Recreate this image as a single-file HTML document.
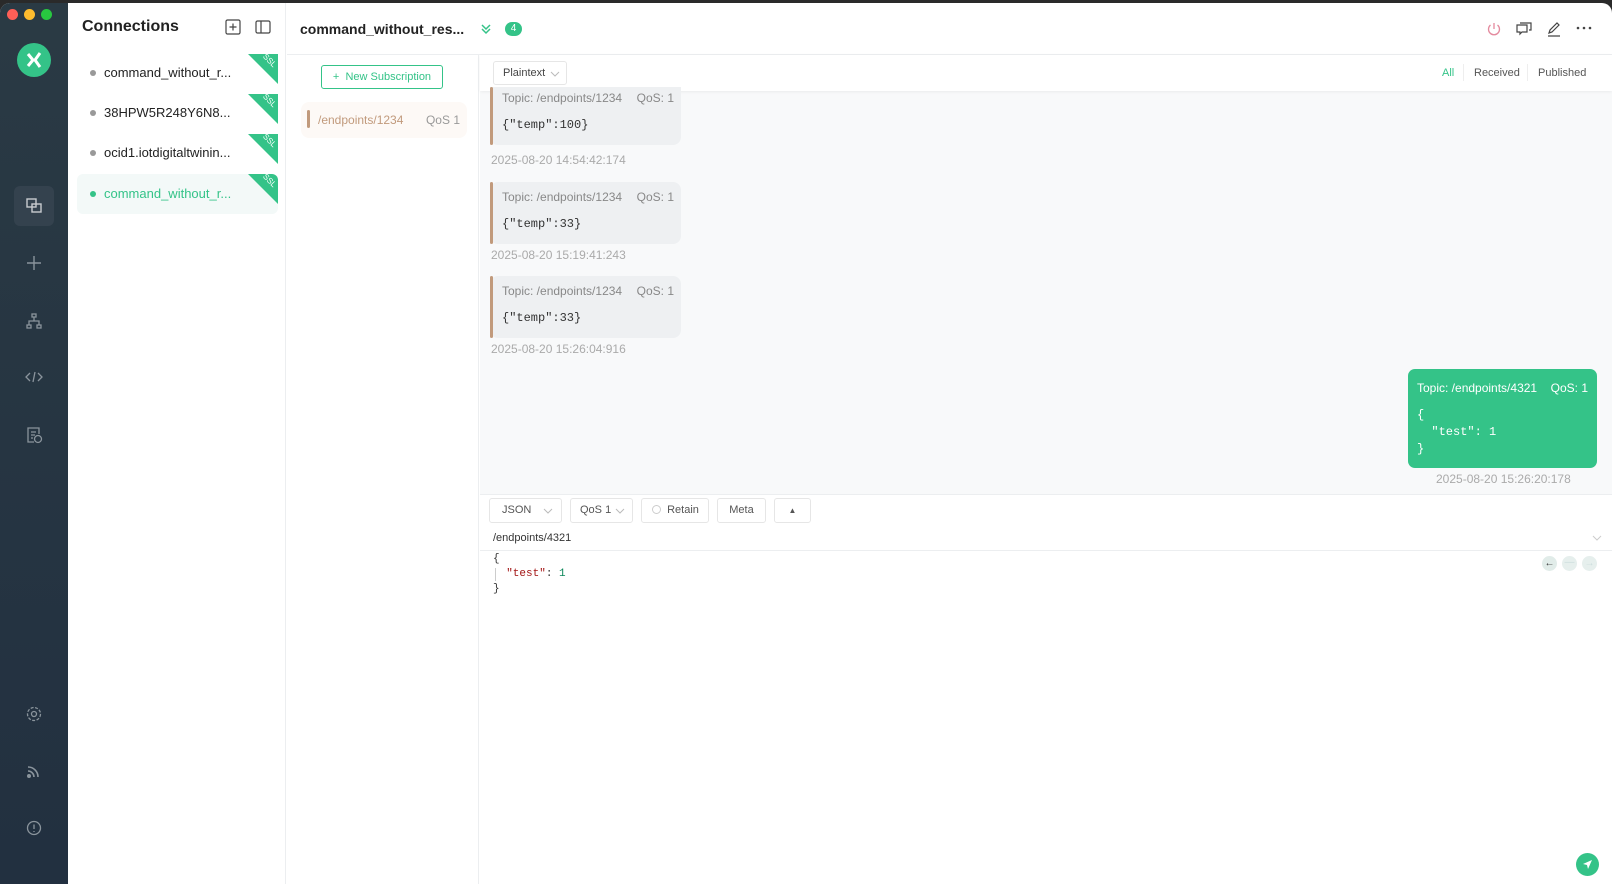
<!DOCTYPE html>
<html><head><meta charset="utf-8">
<style>
*{box-sizing:border-box;margin:0;padding:0}
body{width:1612px;height:884px;overflow:hidden;background:#2a2a2a;font-family:"Liberation Sans",sans-serif;position:relative}
.win{position:absolute;left:0;top:3px;width:1612px;height:881px;background:#fff;border-radius:10px 10px 0 0;overflow:hidden}
.side{position:absolute;left:0;top:0;width:68px;height:100%;background:linear-gradient(#2a3a44,#223040)}
.dot{position:absolute;top:6px;width:11px;height:11px;border-radius:50%}
.ico{position:absolute;left:22px;width:24px;height:24px}
.conn{position:absolute;left:68px;top:0;width:218px;height:100%;background:#fff;border-right:1px solid #eceef0}
.item{position:absolute;left:9px;width:201px;height:38px;font-size:13px;color:#222;overflow:hidden}
.item .b{position:absolute;left:13px;top:16px;width:6px;height:6px;border-radius:50%;background:#999}
.item .t{position:absolute;left:27px;top:11px}
.ssl{position:absolute;right:0;top:0;width:0;height:0;border-top:30px solid #34c388;border-left:30px solid transparent}
.ssl i{position:absolute;right:1px;top:-28px;font-size:8px;color:#fff;transform:rotate(45deg);font-style:normal}
.main{position:absolute;left:287px;top:0;right:0;height:100%}
.hdr{position:absolute;left:0;right:0;top:0;height:52px;border-bottom:1px solid #eceef0}
.subs{position:absolute;left:0;top:52px;width:192px;bottom:0;border-right:1px solid #eceef0}
.msgs{position:absolute;left:193px;top:52px;right:0;height:439px;background:#f8f9fa}
.tb{position:absolute;left:0;right:0;top:0;height:36px;background:#fff;box-shadow:0 1px 3px rgba(0,0,0,.06)}
.card{position:absolute;left:10px;width:191px;height:62px;background:#eef0f2;border-radius:8px;font-size:12px;color:#888}
.card:before{content:"";position:absolute;left:0;top:0;width:3px;height:100%;background:#c19a7c;border-radius:2px}
.card .tp{position:absolute;left:12px;top:8px}
.card .q{position:absolute;right:7px;top:8px}
.card .m{position:absolute;left:12px;top:35px;font-family:"Liberation Mono",monospace;color:#333;font-size:12px}
.ts{position:absolute;font-size:12px;color:#aaa}
.btn{position:absolute;top:495px;height:25px;border:1px solid #e6e6e6;border-radius:3px;font-size:11px;color:#555;background:#fff;line-height:23px;white-space:nowrap}
.chev{position:absolute;top:9px}
</style></head><body>
<div class="win">
<div class="side">
 <div class="dot" style="left:7px;background:#fe5f57"></div>
 <div class="dot" style="left:24px;background:#febc2e"></div>
 <div class="dot" style="left:41px;background:#28c840"></div>
 <div style="position:absolute;left:17px;top:40px;width:34px;height:34px;border-radius:50%;background:#34c388"></div>
 <svg style="position:absolute;left:17px;top:40px" width="34" height="34" viewBox="0 0 34 34"><path d="M11 11l5 6-5 6M23 10l-5 7 5 7" stroke="#fff" stroke-width="3" fill="none"/></svg>
 <div style="position:absolute;left:14px;top:183px;width:40px;height:40px;border-radius:6px;background:#34424e"></div>
 <svg class="ico" style="top:191px" viewBox="0 0 24 24" fill="none" stroke="#c8ccd0" stroke-width="1.4"><rect x="5" y="5" width="9" height="8"/><rect x="10" y="10" width="9" height="8"/></svg>
 <svg class="ico" style="top:248px" viewBox="0 0 24 24" stroke="#8a949c" stroke-width="1.4"><path d="M12 5v14M5 12h14"/></svg>
 <svg class="ico" style="top:306px" viewBox="0 0 24 24" fill="none" stroke="#8a949c" stroke-width="1.3"><rect x="10" y="5" width="4" height="3"/><rect x="5" y="16" width="4" height="3"/><rect x="15" y="16" width="4" height="3"/><path d="M12 8v4M7 16v-4h10v4"/></svg>
 <svg class="ico" style="top:362px" viewBox="0 0 24 24" fill="none" stroke="#8a949c" stroke-width="1.3"><path d="M8 8l-4 4 4 4M16 8l4 4-4 4M13 7l-2 10"/></svg>
 <svg class="ico" style="top:420px" viewBox="0 0 24 24" fill="none" stroke="#8a949c" stroke-width="1.3"><path d="M17 11V5H6v14h6M9 9h5M9 12h4M9 15h2"/><circle cx="16" cy="16" r="3.5"/></svg>
 <svg class="ico" style="top:699px" viewBox="0 0 24 24" fill="none" stroke="#8a949c" stroke-width="1.3"><circle cx="12" cy="12" r="2.5"/><circle cx="12" cy="12" r="6.5" stroke-dasharray="3 1.5"/></svg>
 <svg class="ico" style="top:756px" viewBox="0 0 24 24" fill="none" stroke="#8a949c" stroke-width="1.6"><path d="M6 8a10 10 0 0 1 10 10M6 12a6 6 0 0 1 6 6"/><circle cx="7" cy="17" r="1.2" fill="#8a949c"/></svg>
 <svg class="ico" style="top:813px" viewBox="0 0 24 24" fill="none" stroke="#8a949c" stroke-width="1.3"><circle cx="12" cy="12" r="6.5"/><path d="M12 8.5v4.5M12 15v1"/></svg>
</div>
<div class="conn">
 <div style="position:absolute;left:14px;top:15px;font-size:16px;font-weight:bold;color:#222">Connections</div>
 <svg style="position:absolute;left:157px;top:16px" width="16" height="16" viewBox="0 0 16 16" fill="none" stroke="#444" stroke-width="1.2"><rect x="1" y="1" width="14" height="14" rx="1.5"/><path d="M8 4.5v7M4.5 8h7"/></svg>
 <svg style="position:absolute;left:187px;top:16px" width="16" height="16" viewBox="0 0 16 16" fill="none" stroke="#444" stroke-width="1.2"><rect x="1" y="2" width="14" height="12" rx="1.5"/><path d="M6 2v12"/></svg>
 <div class="item" style="top:51px"><div class="b"></div><div class="t">command_without_r...</div><div class="ssl"><i>SSL</i></div></div>
 <div class="item" style="top:91px"><div class="b"></div><div class="t">38HPW5R248Y6N8...</div><div class="ssl"><i>SSL</i></div></div>
 <div class="item" style="top:131px"><div class="b"></div><div class="t">ocid1.iotdigitaltwinin...</div><div class="ssl"><i>SSL</i></div></div>
 <div class="item" style="top:171px;background:#f3f9f8;border-radius:6px;height:40px"><div class="b" style="background:#34c388;top:17px"></div><div class="t" style="color:#34c388;top:12px">command_without_r...</div><div class="ssl"><i>SSL</i></div></div>
</div>
<div class="main">
 <div class="hdr">
  <div style="position:absolute;left:13px;top:18px;font-size:14px;font-weight:bold;color:#222">command_without_res...</div>
  <svg style="position:absolute;left:193px;top:20px" width="12" height="12" viewBox="0 0 12 12" fill="none" stroke="#34c388" stroke-width="1.5"><path d="M2 2l4 4 4-4M2 6l4 4 4-4"/></svg>
  <div style="position:absolute;left:218px;top:19px;width:17px;height:14px;border-radius:7px;background:#34c388;color:#fff;font-size:10px;text-align:center;line-height:14px">4</div>
  <svg style="position:absolute;left:1198px;top:17px" width="18" height="18" viewBox="0 0 18 18" fill="none" stroke="#e48a9e" stroke-width="1.3"><path d="M9 3v6M5.5 5a5.5 5.5 0 1 0 7 0"/></svg>
  <svg style="position:absolute;left:1228px;top:17px" width="18" height="18" viewBox="0 0 18 18" fill="none" stroke="#444" stroke-width="1.2"><path d="M2 5h10v7H7l-2 2v-2H2z"/><path d="M5 3h11v7h-2"/></svg>
  <svg style="position:absolute;left:1258px;top:17px" width="18" height="18" viewBox="0 0 18 18" fill="none" stroke="#444" stroke-width="1.2"><path d="M4 13l1-3 7-7 2 2-7 7zM3 16h12"/></svg>
  <svg style="position:absolute;left:1288px;top:23px" width="18" height="4" viewBox="0 0 18 4" fill="#444"><circle cx="3" cy="2" r="1.3"/><circle cx="9" cy="2" r="1.3"/><circle cx="15" cy="2" r="1.3"/></svg>
 </div>
 <div class="subs">
  <div style="position:absolute;left:34px;top:10px;width:122px;height:24px;border:1px solid #34c388;border-radius:3px;color:#34c388;font-size:11px;text-align:center;line-height:22px">+&nbsp;&nbsp;New Subscription</div>
  <div style="position:absolute;left:14px;top:47px;width:166px;height:36px;background:#fdf9f6;border-radius:8px">
   <div style="position:absolute;left:6px;top:8px;width:3px;height:18px;background:#c19a7c;border-radius:2px"></div>
   <div style="position:absolute;left:17px;top:11px;font-size:12px;color:#c19a7c">/endpoints/1234</div>
   <div style="position:absolute;right:7px;top:11px;font-size:12px;color:#999">QoS 1</div>
  </div>
 </div>
 <div class="msgs">
  <div class="tb">
   <div style="position:absolute;left:13px;top:6px;width:74px;height:24px;border:1px solid #e6e6e6;border-radius:3px;font-size:11px;color:#444;padding-left:9px;line-height:22px;white-space:nowrap">Plaintext<svg class="chev" style="left:56px;top:9px" width="10" height="6" viewBox="0 0 10 6" fill="none" stroke="#bbb"><path d="M1 1l4 4 4-4"/></svg></div>
   <div style="position:absolute;left:962px;top:12px;font-size:11px;color:#34c388">All</div>
   <div style="position:absolute;left:983px;top:9px;width:1px;height:17px;background:#eee"></div>
   <div style="position:absolute;left:994px;top:12px;font-size:11px;color:#555">Received</div>
   <div style="position:absolute;left:1047px;top:9px;width:1px;height:17px;background:#eee"></div>
   <div style="position:absolute;left:1058px;top:12px;font-size:11px;color:#555">Published</div>
  </div>
  <div class="card" style="top:32px;height:58px;border-radius:0 0 8px 8px"><span class="tp" style="top:4px">Topic: /endpoints/1234</span><span class="q" style="top:4px">QoS: 1</span><span class="m" style="top:31px">{"temp":100}</span></div>
  <div class="ts" style="left:11px;top:98px">2025-08-20 14:54:42:174</div>
  <div class="card" style="top:127px"><span class="tp">Topic: /endpoints/1234</span><span class="q">QoS: 1</span><span class="m">{"temp":33}</span></div>
  <div class="ts" style="left:11px;top:193px">2025-08-20 15:19:41:243</div>
  <div class="card" style="top:221px"><span class="tp">Topic: /endpoints/1234</span><span class="q">QoS: 1</span><span class="m">{"temp":33}</span></div>
  <div class="ts" style="left:11px;top:287px">2025-08-20 15:26:04:916</div>
  <div style="position:absolute;left:928px;top:314px;width:189px;height:99px;background:#34c388;border-radius:7px;color:#fff;font-size:12px">
   <span style="position:absolute;left:9px;top:12px">Topic: /endpoints/4321</span><span style="position:absolute;right:9px;top:12px">QoS: 1</span>
   <pre style="position:absolute;left:9px;top:38px;font-family:'Liberation Mono',monospace;font-size:12px;line-height:17px">{
  "test": 1
}</pre>
  </div>
  <div class="ts" style="left:956px;top:417px">2025-08-20 15:26:20:178</div>
 </div>
 <div style="position:absolute;left:193px;top:491px;right:0;height:1px;background:#eceef0"></div>
 <div class="btn" style="left:202px;width:73px;padding-left:12px">JSON<svg class="chev" style="left:53px" width="10" height="6" viewBox="0 0 10 6" fill="none" stroke="#bbb"><path d="M1 1l4 4 4-4"/></svg></div>
 <div class="btn" style="left:283px;width:63px;padding-left:9px">QoS 1<svg class="chev" style="left:44px" width="10" height="6" viewBox="0 0 10 6" fill="none" stroke="#bbb"><path d="M1 1l4 4 4-4"/></svg></div>
 <div class="btn" style="left:354px;width:68px;padding-left:10px"><span style="display:inline-block;width:9px;height:9px;border:1px solid #ccc;border-radius:50%;vertical-align:-1px"></span>&nbsp; Retain</div>
 <div class="btn" style="left:430px;width:49px;text-align:center">Meta</div>
 <div class="btn" style="left:487px;width:37px;text-align:center;font-size:8px">▲</div>
 <div style="position:absolute;left:206px;top:529px;font-size:11px;color:#333">/endpoints/4321</div>
 <svg style="position:absolute;left:1305px;top:532px" width="10" height="6" viewBox="0 0 10 6" fill="none" stroke="#ccc"><path d="M1 1l4 4 4-4"/></svg>
 <div style="position:absolute;left:193px;top:547px;right:0;height:1px;background:#eceef0"></div>
 <pre style="position:absolute;left:206px;top:549px;font-family:'Liberation Mono',monospace;font-size:11px;line-height:15px;color:#333">{
  <span style="color:#a31515">"test"</span>: <span style="color:#098658">1</span>
}</pre>
 <div style="position:absolute;left:208px;top:565px;width:1px;height:13px;background:#ccc"></div>
 <div style="position:absolute;left:1255px;top:553px;width:15px;height:15px;border-radius:50%;background:#e1ece9;font-size:10px;text-align:center;line-height:15px;color:#333">←</div>
 <div style="position:absolute;left:1275px;top:553px;width:15px;height:15px;border-radius:50%;background:#e6efed;font-size:10px;text-align:center;line-height:14px;color:#cdd">—</div>
 <div style="position:absolute;left:1295px;top:553px;width:15px;height:15px;border-radius:50%;background:#e6efed;font-size:10px;text-align:center;line-height:15px;color:#cdd">→</div>
 <div style="position:absolute;left:1289px;top:850px;width:23px;height:23px;border-radius:50%;background:#34c388"></div>
 <svg style="position:absolute;left:1289px;top:850px" width="23" height="23" viewBox="0 0 23 23"><path d="M16 7l-9 4 4 1 1 4z" fill="#fff"/></svg>
</div>
</div>
</body></html>
